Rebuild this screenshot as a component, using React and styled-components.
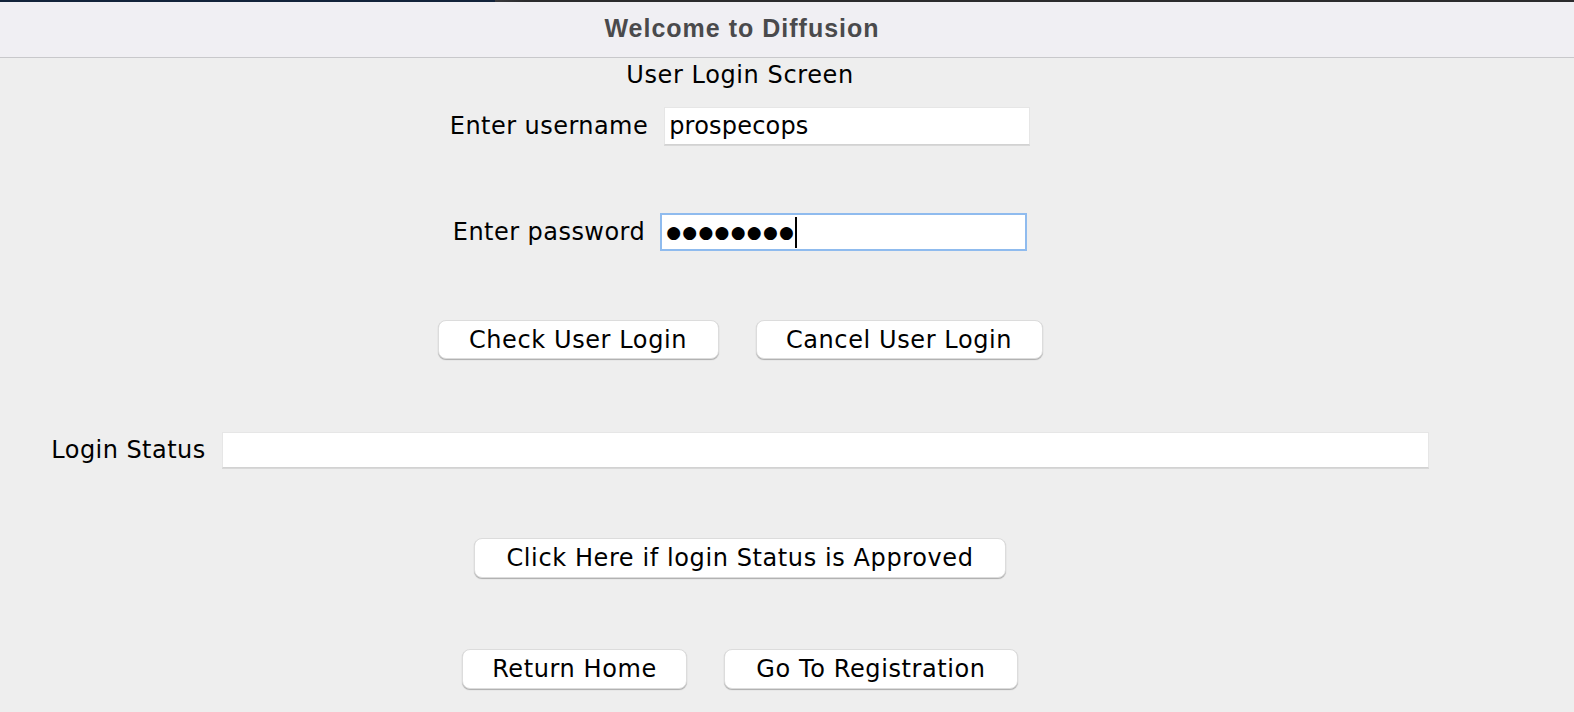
import styled, { createGlobalStyle } from "styled-components";

const GlobalStyle = createGlobalStyle`
	html, body {
		margin: 0;
		padding: 0;
		background: #eeeeee;
	}
	body {
		font-family: "DejaVu Sans", "Liberation Sans", sans-serif;
	}
`;

export default function App() {
	return (
		<>
			<GlobalStyle />
			<Window>
				<TopStrip />
				<TitleBar>
					<Title>Welcome to Diffusion</Title>
				</TitleBar>
				<Content>
					<Heading>User Login Screen</Heading>

					<Row $top={18} $gap={16}>
						<Label>Enter username</Label>
						<Field $width={366} $height={38}>
							prospecops
						</Field>
					</Row>

					<Row $top={68} $gap={15}>
						<Label>Enter password</Label>
						<Field $width={367} $height={38} $focused>
							<Dots>●●●●●●●●</Dots>
							<Caret />
						</Field>
					</Row>

					<Row $top={69} $gap={37}>
						<Button $width={281}>Check User Login</Button>
						<Button $width={287}>Cancel User Login</Button>
					</Row>

					<Row $top={73} $gap={16}>
						<Label>Login Status</Label>
						<Field $width={1207} $height={36} />
					</Row>

					<Row $top={70}>
						<Button $width={532} $height={40}>
							Click Here if login Status is Approved
						</Button>
					</Row>

					<Row $top={71} $gap={37}>
						<Button $width={225} $height={40}>
							Return Home
						</Button>
						<Button $width={294} $height={40}>
							Go To Registration
						</Button>
					</Row>
				</Content>
			</Window>
		</>
	);
}

const Window = styled.div`
	width: 1574px;
	height: 712px;
	overflow: hidden;
	background: #eeeeee;
`;

const TopStrip = styled.div`
	height: 2px;
	background: linear-gradient(to right, #12233a 0, #12233a 495px, #3a3a3c 495px, #2b2b2d 525px);
`;

const TitleBar = styled.div`
	box-sizing: border-box;
	height: 56px;
	display: flex;
	align-items: center;
	justify-content: center;
	padding: 0 90px 3px 0;
	background: #f0eff3;
	border-bottom: 1px solid #c8c8cb;
`;

const Title = styled.div`
	font-family: "Liberation Sans", Arial, sans-serif;
	font-weight: bold;
	font-size: 25px;
	letter-spacing: 1px;
	color: #4a4a4c;
`;

const Content = styled.div`
	display: flex;
	flex-direction: column;
	align-items: center;
	padding-right: 94px;
	letter-spacing: 0.6px;
`;

const Heading = styled.div`
	margin-top: 3px;
	height: 28px;
	line-height: 28px;
	font-size: 24px;
	color: #000;
`;

const Row = styled.div`
	display: flex;
	align-items: center;
	gap: ${(p) => p.$gap || 0}px;
	margin-top: ${(p) => p.$top}px;
`;

const Label = styled.div`
	font-size: 24px;
	letter-spacing: 0.45px;
	color: #000;
	white-space: nowrap;
`;

const Field = styled.div`
	box-sizing: border-box;
	width: ${(p) => p.$width}px;
	height: ${(p) => p.$height}px;
	display: flex;
	align-items: center;
	padding: 0 4px;
	background: #ffffff;
	font-size: 24px;
	letter-spacing: 0.2px;
	color: #000;
	border: ${(p) => (p.$focused ? "2px solid #8fbbee" : "1px solid #e6e6e6")};
	border-bottom-color: ${(p) => (p.$focused ? "#8fbbee" : "#d2d2d2")};
	box-shadow: ${(p) => (p.$focused ? "none" : "0 1px 0 #d8d8d8")};
`;

const Dots = styled.span`
	font-family: "DejaVu Sans", sans-serif;
	font-size: 17px;
	letter-spacing: 1.3px;
	line-height: 1;
`;

const Caret = styled.span`
	display: inline-block;
	width: 2px;
	height: 31px;
	background: #000;
`;

const Button = styled.button`
	box-sizing: border-box;
	width: ${(p) => p.$width}px;
	height: ${(p) => p.$height || 39}px;
	padding: 0;
	background: #ffffff;
	border: 1px solid #dcdcdc;
	border-radius: 8px;
	box-shadow: 0 1px 1px rgba(0, 0, 0, 0.28);
	font-family: "DejaVu Sans", sans-serif;
	font-size: 24px;
	letter-spacing: 0.6px;
	color: #000;
	white-space: nowrap;
`;
